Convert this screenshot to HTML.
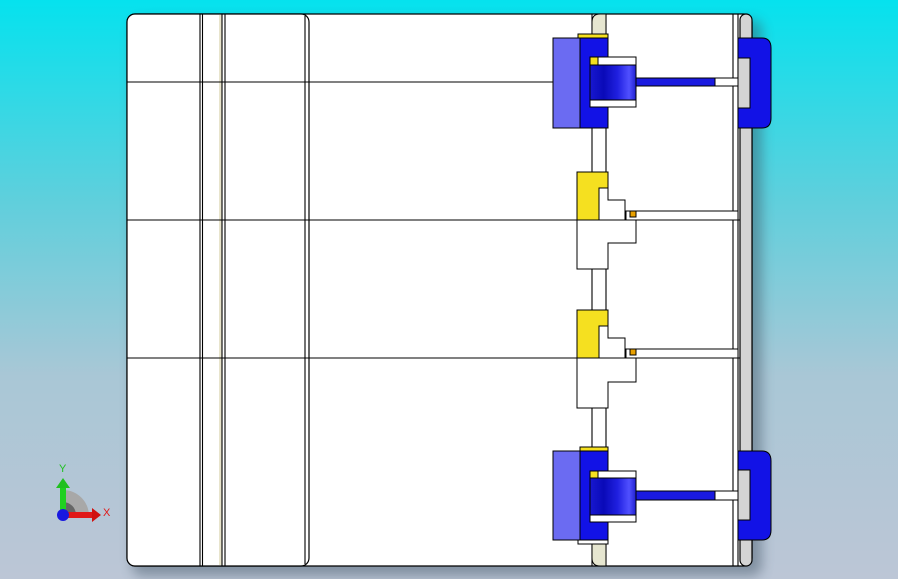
<!DOCTYPE html><html><head><style>
html,body{margin:0;padding:0;width:898px;height:579px;overflow:hidden;background:linear-gradient(#05e2ee 0%,#60cfdc 35%,#a9c7d6 65%,#bcc6d6 100%);}
svg{position:absolute;left:0;top:0}
</style></head><body>
<svg width="898" height="579" viewBox="0 0 898 579">
<defs><filter id="sh" x="-10%" y="-10%" width="130%" height="130%"><feGaussianBlur stdDeviation="6"/></filter>
<linearGradient id="cyl" x1="0" x2="1"><stop offset="0" stop-color="#1818d0"/><stop offset=".3" stop-color="#0a0ab8"/><stop offset=".6" stop-color="#2020e0"/><stop offset=".85" stop-color="#5050ff"/><stop offset="1" stop-color="#2020d0"/></linearGradient></defs>
<rect x="132" y="20" width="630" height="556" rx="10" fill="#3a5060" opacity=".45" filter="url(#sh)"/>
<g stroke="#000" stroke-width="1.2" fill="#fff">
<rect x="127" y="14" width="625" height="552" rx="8"/>
<rect x="740" y="14" width="12" height="552" rx="6" fill="#d4d4d4"/>
<rect x="127" y="14" width="182" height="552" rx="8"/>
</g>
<rect x="219" y="15" width="3" height="550" fill="#e8e4cc"/>
<g stroke="#000" stroke-width="1.1" fill="none">
<line x1="200" y1="14" x2="200" y2="566"/><line x1="202.5" y1="14" x2="202.5" y2="566"/>
<line x1="222" y1="14" x2="222" y2="566"/><line x1="225" y1="14" x2="225" y2="566"/>
<line x1="305" y1="16" x2="305" y2="564"/>
<line x1="127" y1="82" x2="553" y2="82"/>
<line x1="127" y1="220" x2="740" y2="220"/>
<line x1="127" y1="358" x2="740" y2="358"/>
<line x1="592" y1="14" x2="592" y2="566"/>
<line x1="606" y1="14" x2="606" y2="566"/>
<line x1="733" y1="14" x2="733" y2="566"/>
<line x1="738" y1="14" x2="738" y2="566"/>
</g>
<!-- beige pills -->
<path d="M592 38 V22 Q592 14 600 14 H606 V38 Z" fill="#e6e6d0" stroke="#000"/>
<path d="M592 544 V558 Q592 566 600 566 H606 V544 Z" fill="#e6e6d0" stroke="#000"/>
<!-- top assembly -->
<g stroke="#000" stroke-width="1">
<rect x="578" y="34" width="30" height="4" fill="#f5e020"/>
<rect x="553" y="38" width="27" height="90" fill="#6b6bf2"/>
<rect x="580" y="38" width="28" height="90" fill="#1212e6"/>
<rect x="590" y="57" width="46" height="50" fill="#fff"/>
<rect x="590" y="65" width="46" height="35" fill="url(#cyl)"/>
<rect x="590" y="57" width="8" height="8" fill="#f5e020"/>
<rect x="636" y="78" width="79" height="8" fill="#1a1ae0"/>
<rect x="715" y="78" width="23" height="8" fill="#fff"/>
<path d="M738 38 H762 Q771 38 771 48 V118 Q771 128 762 128 H738 V108 H750 V58 H738 Z" fill="#1212e6"/>
<rect x="738" y="58" width="12" height="50" fill="#d4d4d4"/>
</g>
<!-- bottom assembly -->
<g stroke="#000" stroke-width="1">
<rect x="578" y="540" width="30" height="4" fill="#fff"/>
<rect x="553" y="451" width="27" height="89" fill="#6b6bf2"/>
<rect x="580" y="447" width="28" height="93" fill="#1212e6"/>
<rect x="580" y="447" width="28" height="4" fill="#f5e020"/>
<rect x="590" y="471" width="46" height="51" fill="#fff"/>
<rect x="590" y="478" width="46" height="37" fill="url(#cyl)"/>
<rect x="590" y="471" width="8" height="7" fill="#f5e020"/>
<rect x="636" y="491" width="79" height="9" fill="#1a1ae0"/>
<rect x="715" y="491" width="23" height="9" fill="#fff"/>
<path d="M738 451 H762 Q771 451 771 461 V530 Q771 540 762 540 H738 V520 H750 V470 H738 Z" fill="#1212e6"/>
<rect x="738" y="470" width="12" height="50" fill="#d4d4d4"/>
</g>
<!-- middle assemblies -->
<g stroke="#000" stroke-width="1" fill="#fff">
<rect x="577" y="172" width="31" height="48" fill="#f5e020"/>
<path d="M599 220 V188 H608 V200 H625 V220 Z"/>
<rect x="626" y="211" width="112" height="9"/>
<rect x="630" y="211" width="6" height="6" fill="#e8a000"/>
<path d="M577 220 H636 V243 H608 V269 H577 Z"/>
<rect x="577" y="310" width="31" height="48" fill="#f5e020"/>
<path d="M599 358 V326 H608 V338 H625 V358 Z"/>
<rect x="626" y="349" width="112" height="9"/>
<rect x="630" y="349" width="6" height="6" fill="#e8a000"/>
<path d="M577 358 H636 V382 H608 V408 H577 Z"/>
</g>
<!-- triad -->
<path d="M63 515 L63 490 A26 26 0 0 1 89 515 Z" fill="#a8a8a8"/>
<path d="M63 515 L63 502 A13 13 0 0 1 76 515 Z" fill="#666"/>
<rect x="60" y="487" width="6" height="26" fill="#20d020"/>
<path d="M56 488 L63 478 L70 488 Z" fill="#20c020"/>
<rect x="63" y="512" width="30" height="6" fill="#e01818"/>
<path d="M92 508 L101 515 L92 522 Z" fill="#d01010"/>
<circle cx="63" cy="515" r="6" fill="#1818e0"/>
<text x="59" y="472" font-family="Liberation Sans,sans-serif" font-size="11" fill="#20c020">Y</text>
<text x="103" y="516" font-family="Liberation Sans,sans-serif" font-size="11" fill="#e01818">X</text>
</svg>
</body></html>
